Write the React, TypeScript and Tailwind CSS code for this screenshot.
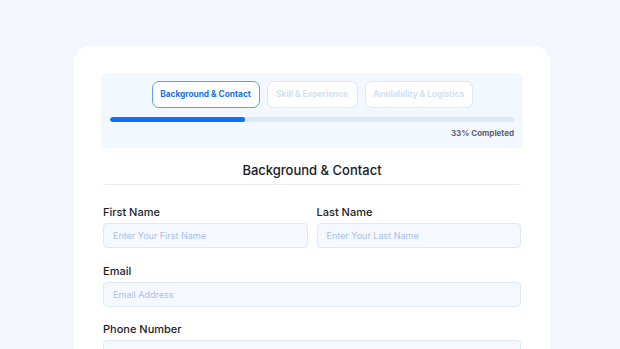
import React from "react";

function Field({ label, placeholder }: { label: string; placeholder: string }) {
  return (
    <div className="flex flex-col flex-1">
      <div className="text-[11px] leading-[14px] font-medium text-[#1c1c1f] mb-[4px]">{label}</div>
      <div className="h-[25px] rounded-[4px] border border-[#dde8f8] bg-[#f5f8ff] flex items-center px-[9px] text-[9px] text-[#a8c1ec]">
        {placeholder}
      </div>
    </div>
  );
}

export default function App() {
  return (
    <div
      className="w-[620px] h-[349px] overflow-hidden bg-[#f3f6fc] pt-[46px] pl-[74px]"
      style={{ fontFamily: "Inter, 'Noto Sans', sans-serif" }}
    >
      <div className="w-[476px] h-[330px] bg-white rounded-[16px] px-[27px] pt-[27px]">
        <div className="bg-[#f3f7fe] rounded-[6px] px-[9px] pt-[8px] pb-[10px] h-[75px]">
          <div className="flex justify-center gap-[7px]">
            <div className="w-[108px] h-[27px] rounded-[7px] border border-[#5c9cf1] bg-white flex items-center justify-center text-[8.3px] font-bold text-[#1b6ee0]">
              Background &amp; Contact
            </div>
            <div className="w-[91px] h-[27px] rounded-[7px] border border-[#dde7f6] bg-white flex items-center justify-center text-[8.3px] font-bold text-[#d2dff3]">
              Skill &amp; Experience
            </div>
            <div className="w-[108px] h-[27px] rounded-[7px] border border-[#dde7f6] bg-white flex items-center justify-center text-[8.3px] font-bold text-[#d2dff3]">
              Availability &amp; Logistics
            </div>
          </div>
          <div className="mt-[9px] h-[5px] rounded-full bg-[#dde8f6] overflow-hidden">
            <div className="h-full w-[33.3%] rounded-full bg-[#1170f4]" />
          </div>
          <div className="mt-[6px] text-right text-[8px] leading-[10px] font-bold text-[#5a6377]">33% Completed</div>
        </div>
        <div className="px-[2px]">
          <div className="h-[37px] flex items-end justify-center pb-[5px] text-[13px] leading-[18px] font-medium text-[#1a1a1c] border-b border-[#e9edf3]">
            Background &amp; Contact
          </div>
          <div className="flex gap-[9px] mt-[20px]">
            <Field label="First Name" placeholder="Enter Your First Name" />
            <Field label="Last Name" placeholder="Enter Your Last Name" />
          </div>
          <div className="mt-[16px]">
            <Field label="Email" placeholder="Email Address" />
          </div>
          <div className="mt-[15px]">
            <Field label="Phone Number" placeholder="" />
          </div>
        </div>
      </div>
    </div>
  );
}
